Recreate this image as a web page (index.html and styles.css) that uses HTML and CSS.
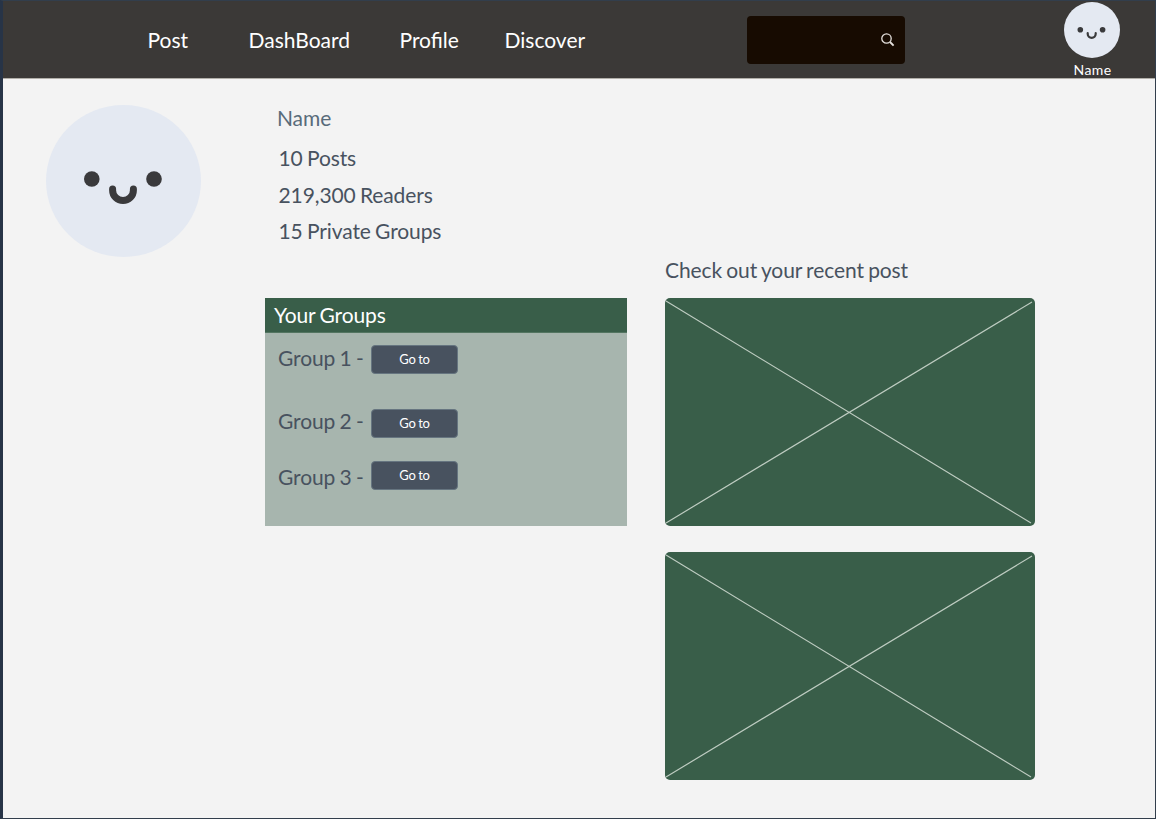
FILE: index.html
```html
<!DOCTYPE html>
<html lang="en">
<head>
<meta charset="utf-8">
<title>Profile</title>
<link rel="stylesheet" href="styles.css">
</head>
<body>
<div class="frame">
  <header class="topbar">
    <nav class="nav">
      <a class="nav-post">Post</a>
      <a class="nav-dashboard">DashBoard</a>
      <a class="nav-profile">Profile</a>
      <a class="nav-discover">Discover</a>
    </nav>
    <div class="search">
      <svg width="14" height="14" viewBox="0 0 14 14"><circle cx="5.5" cy="5.5" r="4.7"/><path d="M9 9L12.6 12.6" class="handle"/></svg>
    </div>
    <div class="account">
      <svg class="account-face" viewBox="0 0 56 56"><circle class="face" cx="28" cy="28" r="28"/><circle class="eye" cx="16.3" cy="27.7" r="2.8"/><circle class="eye" cx="38.6" cy="27.7" r="2.8"/><path class="smile" d="M23.7 31.2v.6a4 4 0 0 0 8 0v-.6"/></svg>
      <span class="account-name">Name</span>
    </div>
  </header>
  <main class="content">
    <svg class="avatar" viewBox="0 0 155 152"><ellipse class="face" cx="77.5" cy="76" rx="77.5" ry="76"/><circle class="eye" cx="45.8" cy="74" r="7.8"/><circle class="eye" cx="108" cy="74" r="7.8"/><path class="smile large" d="M66.6 84v1.2a10.4 10.4 0 0 0 20.8 0V84"/></svg>
    <section class="profile">
      <h1 class="profile-name">Name</h1>
      <p class="stat">10 Posts</p>
      <p class="stat">219,300 Readers</p>
      <p class="stat">15 Private Groups</p>
      <div class="groups">
        <h2 class="groups-title">Your Groups</h2>
        <div class="group first"><span>Group 1 -</span><button class="go">Go to</button></div>
        <div class="group second"><span>Group 2 -</span><button class="go">Go to</button></div>
        <div class="group third"><span>Group 3 -</span><button class="go">Go to</button></div>
      </div>
    </section>
    <section class="recent">
      <h2 class="recent-title">Check out your recent post</h2>
      <svg class="post" viewBox="0 0 370 228"><path d="M1 3L366 225M1 225L367 4"/></svg>
      <svg class="post" viewBox="0 0 370 228"><path d="M1 3L366 225M1 225L367 4"/></svg>
    </section>
  </main>
</div>
</body>
</html>
```
FILE: styles.css
```css
* { box-sizing: border-box; margin: 0; }
body {
  font-family: Lato, "Liberation Sans", sans-serif;
  font-size: 21px;
  line-height: 26px;
  font-weight: 400;
  color: #48525f;
}
h1, h2 { font-size: inherit; font-weight: inherit; }
svg { display: block; }

.frame {
  height: 819px;
  background: #f3f3f3;
  border: 1px solid #323e4c;
  border-left: 3px solid #273447;
  overflow: hidden;
}

.topbar {
  display: flex;
  height: 78px;
  background: #3b3937;
  border-bottom: 1px solid #b1afa9;
  color: #fff;
}
.nav {
  display: grid;
  grid-template-columns: 101px 151px 105px 242.5px;
  padding-left: 144.5px;
  padding-top: 26px;
}
.search {
  width: 158px;
  height: 48px;
  margin-top: 15px;
  padding: 17px 10px 0 0;
  display: flex;
  justify-content: flex-end;
  background: #170b01;
  border-radius: 4px;
}
.search svg { fill: none; stroke: #e5e1dd; stroke-width: 1.3; }
.search .handle { stroke-width: 1.9; }
.account {
  width: 58px;
  margin-left: 158px;
  padding-top: 1px;
  display: flex;
  flex-direction: column;
  align-items: center;
  font-size: 14px;
  line-height: 17px;
  letter-spacing: 0.4px;
}
.account-face { width: 56px; height: 56px; flex: none; }
.account-name { margin-top: 3px; padding-left: 1px; }

.face { fill: #e4e9f2; }
.eye { fill: #3a3a3c; }
.smile { fill: none; stroke: #3a3a3c; stroke-width: 2.2; stroke-linecap: round; }
.smile.large { stroke-width: 7; }

.content {
  display: grid;
  grid-template-columns: 155px 362px 371px;
  padding-left: 43px;
  padding-top: 26px;
  letter-spacing: -0.1px;
  word-spacing: -1px;
}
.avatar { width: 155px; height: 152px; }
.profile { margin-left: 64px; width: 362px; }
.profile-name { padding-left: 12px; margin-bottom: 14.4px; color: #586b7a; }
.stat { padding-left: 13.5px; margin-bottom: 10.4px; }

.groups {
  height: 228px;
  margin-top: 53.4px;
  background: #a7b5ae;
}
.groups-title {
  height: 35px;
  padding: 4px 0 0 9px;
  background: #395e49;
  border-bottom: 1px solid #537561;
  color: #fff;
}
.group { display: flex; padding-left: 13px; height: 28px; }
.group span { width: 93px; }
.go {
  width: 87px;
  height: 29px;
  padding: 0;
  border: 1px solid #667580;
  border-radius: 4px;
  background: #48525f;
  color: #fff;
  font: 13px/26px Lato, sans-serif;
  letter-spacing: -0.2px;
  word-spacing: -0.6px;
}
.first { margin-top: 12px; }
.second { margin-top: 36px; }
.third { margin-top: 24px; }
.second span { margin-top: -1px; }
.third span { margin-top: 3px; }

.recent { margin-left: 102px; padding-top: 152px; width: 370px; }
.recent-title { margin-bottom: 15px; }
.post {
  width: 370px;
  height: 228px;
  margin-bottom: 26px;
  background: #395e49;
  border-radius: 5px;
  fill: none;
  stroke: #bdcbc0;
  stroke-width: 1.2;
}
```
